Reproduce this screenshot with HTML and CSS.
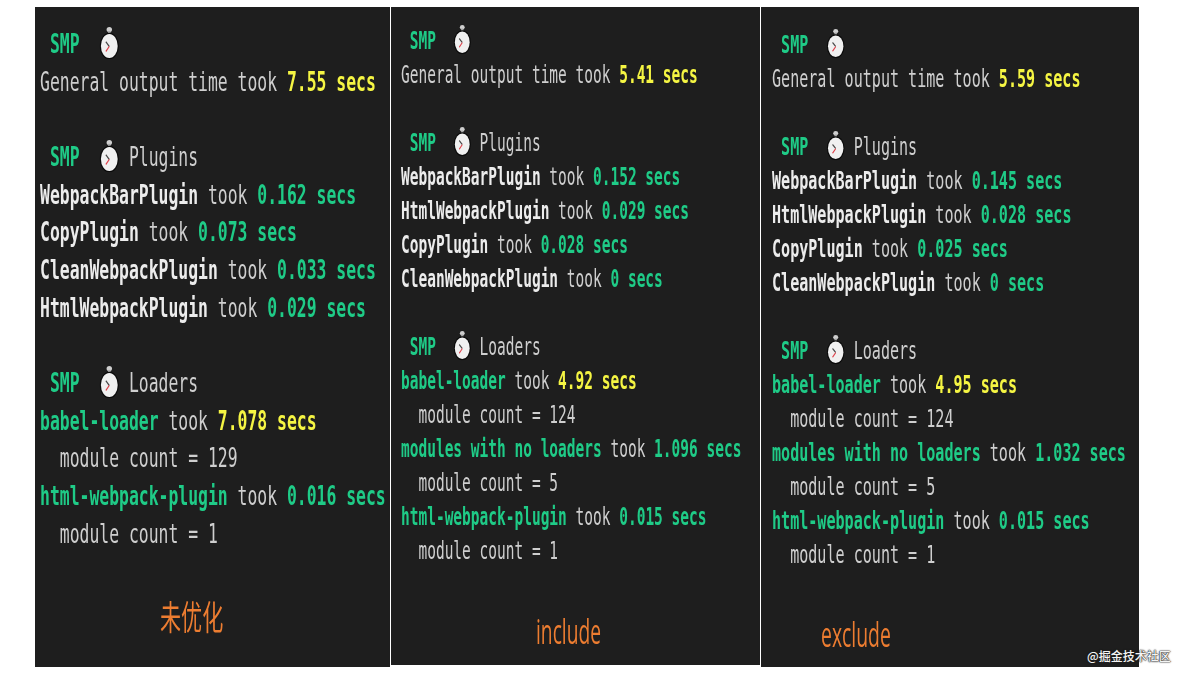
FILE: index.html
```html
<!DOCTYPE html>
<html lang="en">
<head>
<meta charset="utf-8">
<title>SMP results</title>
<link rel="stylesheet" href="styles.css">
</head>
<body>
<svg class="defs" width="0" height="0" aria-hidden="true">
  <symbol id="watch" viewBox="0 0 40 50" preserveAspectRatio="none">
    <ellipse cx="20" cy="4" rx="5.5" ry="4" fill="#cfcfcf"/>
    <rect x="17.5" y="6" width="5" height="6" fill="#a8a8a8"/>
    <ellipse cx="20" cy="29.5" rx="19.5" ry="20.5" fill="#0a0a0a"/>
    <ellipse cx="20" cy="29.5" rx="17" ry="18.5" fill="#f0f0f0"/>
    <path d="M13 23 L20 30" stroke="#444" stroke-width="2.2" fill="none"/>
    <path d="M20 30 L13 38" stroke="#e0404a" stroke-width="2.2" fill="none"/>
  </symbol>
</svg>
<main class="board">
  <section class="panel panel-a">
    <div class="sheet">
      <div class="row"> <span class="g">SMP</span>  <svg class="watch"><use href="#watch"/></svg></div>
      <div class="row">General output time took <span class="y">7.55 secs</span></div>
      <div class="row"> </div>
      <div class="row"> <span class="g">SMP</span>  <svg class="watch"><use href="#watch"/></svg> Plugins</div>
      <div class="row"><b>WebpackBarPlugin</b> took <span class="g">0.162 secs</span></div>
      <div class="row"><b>CopyPlugin</b> took <span class="g">0.073 secs</span></div>
      <div class="row"><b>CleanWebpackPlugin</b> took <span class="g">0.033 secs</span></div>
      <div class="row"><b>HtmlWebpackPlugin</b> took <span class="g">0.029 secs</span></div>
      <div class="row"> </div>
      <div class="row"> <span class="g">SMP</span>  <svg class="watch"><use href="#watch"/></svg> Loaders</div>
      <div class="row"><span class="g">babel-loader</span> took <span class="y">7.078 secs</span></div>
      <div class="row">  module count = 129</div>
      <div class="row"><span class="g">html-webpack-plugin</span> took <span class="g">0.016 secs</span></div>
      <div class="row">  module count = 1</div>
    </div>
    <p class="label label-a">未优化</p>
  </section>
  <section class="panel panel-b">
    <div class="sheet">
      <div class="row"> <span class="g">SMP</span>  <svg class="watch"><use href="#watch"/></svg></div>
      <div class="row">General output time took <span class="y">5.41 secs</span></div>
      <div class="row"> </div>
      <div class="row"> <span class="g">SMP</span>  <svg class="watch"><use href="#watch"/></svg> Plugins</div>
      <div class="row"><b>WebpackBarPlugin</b> took <span class="g">0.152 secs</span></div>
      <div class="row"><b>HtmlWebpackPlugin</b> took <span class="g">0.029 secs</span></div>
      <div class="row"><b>CopyPlugin</b> took <span class="g">0.028 secs</span></div>
      <div class="row"><b>CleanWebpackPlugin</b> took <span class="g">0 secs</span></div>
      <div class="row"> </div>
      <div class="row"> <span class="g">SMP</span>  <svg class="watch"><use href="#watch"/></svg> Loaders</div>
      <div class="row"><span class="g">babel-loader</span> took <span class="y">4.92 secs</span></div>
      <div class="row">  module count = 124</div>
      <div class="row"><span class="g">modules with no loaders</span> took <span class="g">1.096 secs</span></div>
      <div class="row">  module count = 5</div>
      <div class="row"><span class="g">html-webpack-plugin</span> took <span class="g">0.015 secs</span></div>
      <div class="row">  module count = 1</div>
    </div>
    <p class="label label-b">include</p>
  </section>
  <section class="panel panel-c">
    <div class="sheet">
      <div class="row"> <span class="g">SMP</span>  <svg class="watch"><use href="#watch"/></svg></div>
      <div class="row">General output time took <span class="y">5.59 secs</span></div>
      <div class="row"> </div>
      <div class="row"> <span class="g">SMP</span>  <svg class="watch"><use href="#watch"/></svg> Plugins</div>
      <div class="row"><b>WebpackBarPlugin</b> took <span class="g">0.145 secs</span></div>
      <div class="row"><b>HtmlWebpackPlugin</b> took <span class="g">0.028 secs</span></div>
      <div class="row"><b>CopyPlugin</b> took <span class="g">0.025 secs</span></div>
      <div class="row"><b>CleanWebpackPlugin</b> took <span class="g">0 secs</span></div>
      <div class="row"> </div>
      <div class="row"> <span class="g">SMP</span>  <svg class="watch"><use href="#watch"/></svg> Loaders</div>
      <div class="row"><span class="g">babel-loader</span> took <span class="y">4.95 secs</span></div>
      <div class="row">  module count = 124</div>
      <div class="row"><span class="g">modules with no loaders</span> took <span class="g">1.032 secs</span></div>
      <div class="row">  module count = 5</div>
      <div class="row"><span class="g">html-webpack-plugin</span> took <span class="g">0.015 secs</span></div>
      <div class="row">  module count = 1</div>
    </div>
    <p class="label label-c">exclude</p>
  </section>
</main>
<div class="mark">@掘金技术社区</div>
</body>
</html>
```
FILE: styles.css
```css
* { box-sizing: border-box; }
html, body { margin: 0; padding: 0; background: #fff; }
body { width: 1186px; height: 675px; overflow: hidden; position: relative; }
.defs { position: absolute; }

.board { display: flex; gap: 1px; align-items: flex-start; padding: 7px 0 0 35px; }

.panel { background: #1e1e1e; overflow: hidden; height: 660px; }
.panel-a { width: 355px; padding: 18px 0 0 5px; }
.panel-b { width: 369px; height: 658px; padding: 17px 0 0 10px; }
.panel-c { width: 378px; padding: 21px 0 0 11px; }

.sheet {
  width: 700px;
  transform-origin: 0 0;
  font-family: "DejaVu Sans Mono", monospace;
  color: #cfcfcf;
  filter: blur(0.35px);
}
.panel-a .sheet { font-size: 26.5px; line-height: 37.68px; transform: scaleX(0.619); }
.panel-b .sheet { font-size: 24px; line-height: 34px; transform: scaleX(0.604); }
.panel-c .sheet { font-size: 24px; line-height: 34px; transform: scaleX(0.628); }

.row { height: 1lh; white-space: pre; }
.g { color: #1fcb87; font-weight: 700; }
.y { color: #f5f543; font-weight: 700; }
b { color: #ececec; font-weight: 700; }

.watch { display: inline-block; width: 2ch; height: 1.22em; vertical-align: -0.24em; }

.label {
  margin: 0;
  color: #ed7d31;
  font-family: "Open Sans", "Noto Sans CJK SC", sans-serif;
  font-size: 34px;
  line-height: 40px;
  transform-origin: 0 0;
  white-space: nowrap;
  filter: blur(0.3px);
}
.label-a { font-family: "Noto Sans CJK SC", sans-serif; margin: 44px 0 0 120px; transform: scaleX(0.62); }
.label-b { margin: 43px 0 0 135px; transform: scaleX(0.565); }
.label-c { margin: 42px 0 0 49px; transform: scaleX(0.57); }

.mark {
  position: absolute;
  left: 1087px;
  top: 649px;
  font-family: "Noto Sans CJK SC", sans-serif;
  font-size: 12px;
  font-weight: 500;
  line-height: 14px;
  color: #f4f4f4;
  text-shadow: 0 0 2px #222, 0 0 1px #222, 0 0 1px #222;
}
```
